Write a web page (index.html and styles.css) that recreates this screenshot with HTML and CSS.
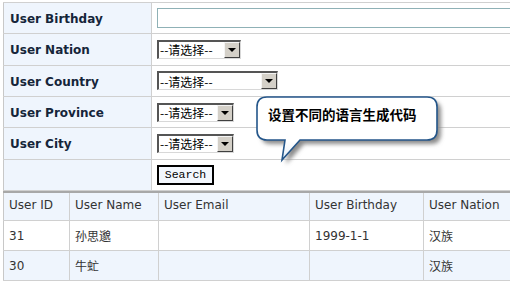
FILE: index.html
```html
<!DOCTYPE html>
<html lang="zh-CN">
  <head>
    <meta charset="UTF-8" />
    <title>User Search</title>
    <link rel="stylesheet" href="styles.css">
  </head>
  <body>
    <div class="page">
      <table class="search-form">
        <tr>
          <th>User Birthday</th>
          <td><input type="text" class="text-box" /></td>
        </tr>
        <tr>
          <th>User Nation</th>
          <td><span class="dropdown w84"><span class="dd-text">--请选择--</span><span class="dd-button"></span></span></td>
        </tr>
        <tr>
          <th>User Country</th>
          <td><span class="dropdown w121"><span class="dd-text">--请选择--</span><span class="dd-button"></span></span></td>
        </tr>
        <tr>
          <th>User Province</th>
          <td><span class="dropdown w77"><span class="dd-text">--请选择--</span><span class="dd-button"></span></span></td>
        </tr>
        <tr>
          <th>User City</th>
          <td><span class="dropdown w77"><span class="dd-text">--请选择--</span><span class="dd-button"></span></span></td>
        </tr>
        <tr>
          <th></th>
          <td><button class="search-button">Search</button></td>
        </tr>
      </table>

      <table class="result-list">
        <tr class="head">
          <td class="c-id">User ID</td>
          <td class="c-name">User Name</td>
          <td class="c-email">User Email</td>
          <td class="c-birth">User Birthday</td>
          <td class="c-nation">User Nation</td>
        </tr>
        <tr>
          <td>31</td>
          <td>孙思邈</td>
          <td></td>
          <td>1999-1-1</td>
          <td>汉族</td>
        </tr>
        <tr class="alt">
          <td>30</td>
          <td>牛虻</td>
          <td></td>
          <td></td>
          <td>汉族</td>
        </tr>
      </table>

      <div class="callout">
        <svg class="callout-shape" width="200" height="78" viewBox="0 0 200 78">
          <defs>
            <filter id="blur" x="-10%" y="-10%" width="130%" height="140%">
              <feGaussianBlur stdDeviation="2" />
            </filter>
            <linearGradient id="fill" x1="0" y1="0" x2="0" y2="1">
              <stop offset="0" stop-color="#ffffff" />
              <stop offset="0.7" stop-color="#ffffff" />
              <stop offset="1" stop-color="#e4eef8" />
            </linearGradient>
          </defs>
          <path d="M17,5 H177 Q187,5 187,15 V38 Q187,48 177,48 H50 L32,68 L35,48 H17 Q7,48 7,38 V15 Q7,5 17,5 Z"
                transform="translate(4,4)" fill="#8a8a8a" filter="url(#blur)" />
          <path d="M17,5 H177 Q187,5 187,15 V38 Q187,48 177,48 H50 L32,68 L35,48 H17 Q7,48 7,38 V15 Q7,5 17,5 Z"
                fill="url(#fill)" stroke="#24568a" stroke-width="1.6" />
        </svg>
        <div class="callout-text">设置不同的语言生成代码</div>
      </div>
    </div>
  </body>
</html>
```

FILE: styles.css
```css
body {
  margin: 0;
  background-color: #ffffff;
  overflow: hidden;
}

.page {
  position: relative;
  width: 507px;
  height: 279px;
  padding: 2px 0 0 3px;
  overflow: hidden;
}

/* search form */

.search-form {
  width: 520px;
  table-layout: fixed;
  border-collapse: collapse;
  border-left: 1px solid #c8c8c8;
}

.search-form tr {
  height: 31.33px;
}

.search-form th,
.search-form td {
  border-top: 1px solid #d0d0d0;
  border-bottom: 1px solid #d0d0d0;
  padding: 0;
  vertical-align: middle;
}

.search-form th {
  width: 141px;
  padding: 2px 0 0 6px;
  text-align: left;
  background-color: #eff5fd;
  border-right: 1px solid #d0d0d0;
  font-family: "DejaVu Sans", Verdana, sans-serif;
  font-weight: bold;
  font-size: 12px;
  color: #15253a;
}

.search-form td {
  padding-left: 5px;
}

.text-box {
  display: block;
  box-sizing: border-box;
  width: 400px;
  height: 20px;
  margin: 0;
  border: 1px solid #8fb1b6;
  background: #ffffff;
}

.dropdown {
  display: flex;
  align-items: center;
  justify-content: space-between;
  box-sizing: border-box;
  height: 19px;
  border-top: 2px solid #555555;
  border-left: 2px solid #555555;
  border-bottom: 1px solid #d8d8d8;
  border-right: 1px solid #d8d8d8;
  background-color: #ffffff;
}

.w84 { width: 84px; }
.w121 { width: 121px; }
.w77 { width: 77px; }

.dd-text {
  padding-left: 1px;
  font-family: "Noto Sans CJK SC", sans-serif;
  font-size: 12px;
  line-height: 15px;
  color: #000000;
}

.dd-button {
  position: relative;
  box-sizing: border-box;
  width: 16px;
  height: 16px;
  background-color: #d4d0c8;
  border-top: 1px solid #f4f4f4;
  border-left: 1px solid #f4f4f4;
  border-bottom: 1px solid #404040;
  border-right: 1px solid #404040;
}

.dd-button::after {
  content: "";
  position: absolute;
  left: 3px;
  top: 5px;
  border-left: 4px solid transparent;
  border-right: 4px solid transparent;
  border-top: 4px solid #000000;
}

.search-button {
  display: block;
  box-sizing: border-box;
  width: 57px;
  height: 20px;
  margin: 0;
  padding: 0;
  border: 2px solid #000000;
  background-color: #f3f7fd;
  font-family: "Liberation Mono", "Courier New", monospace;
  font-size: 11.5px;
  color: #000000;
}

/* result list */

.result-list {
  width: 540px;
  table-layout: fixed;
  border-collapse: collapse;
  border-left: 1px solid #c8c8c8;
  font-family: "DejaVu Sans", Verdana, "Noto Sans CJK SC", sans-serif;
  font-size: 12px;
  color: #333333;
}

.result-list tr {
  height: 30px;
}

.result-list tr.head {
  height: 29px;
  background-color: #eff5fd;
  border-top: 2px solid #a8a8a8;
}

.result-list tr.head td {
  padding-bottom: 3px;
}

.result-list tr.alt {
  background-color: #eff5fd;
}

.result-list td {
  padding: 0 0 0 5px;
  border-right: 1px solid #d0d0d0;
  border-bottom: 1px solid #d0d0d0;
  vertical-align: middle;
  text-align: left;
}

.c-id { width: 60px; }
.c-name { width: 83px; }
.c-email { width: 145px; }
.c-birth { width: 108px; }

/* callout bubble */

.callout {
  position: absolute;
  left: 250px;
  top: 92px;
  width: 200px;
  height: 78px;
}

.callout-shape {
  display: block;
}

.callout-text {
  position: absolute;
  left: 18px;
  top: 12px;
  font-family: "Noto Sans CJK SC", sans-serif;
  font-weight: bold;
  font-size: 13.5px;
  color: #000000;
}
```
